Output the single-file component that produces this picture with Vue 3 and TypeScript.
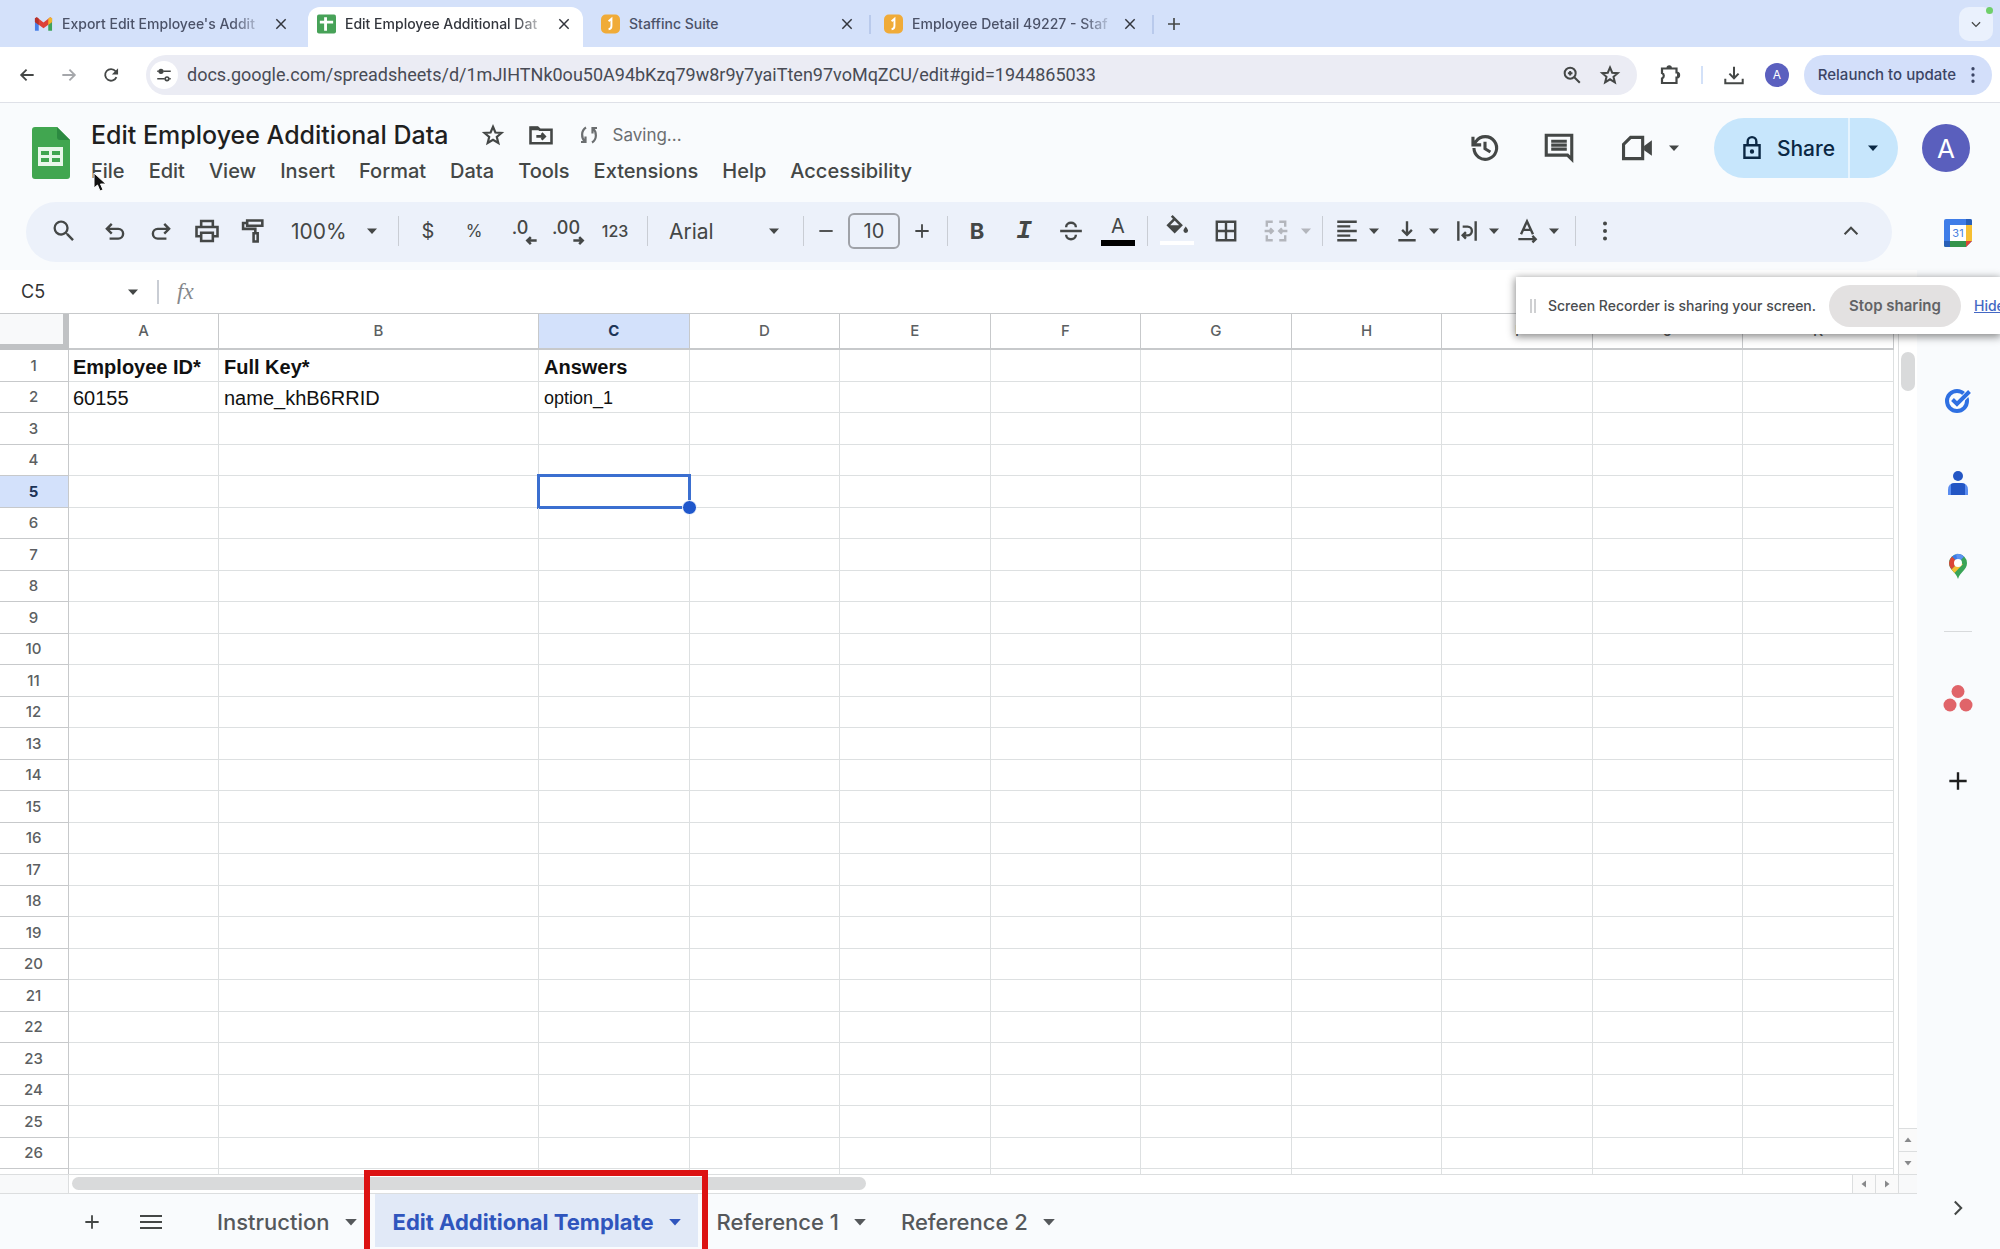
<script setup lang="ts">
import { h, ref } from 'vue'
import type { FunctionalComponent } from 'vue'

interface Glyph {
  line?: string
  fill?: string
}

const glyphs: Record<string, Glyph> = {
  back: { line: 'M20 12H5M11.500 5.500 5 12l6.500 6.500' },
  forward: { line: 'M4 12h15M12.500 5.500 19 12l-6.500 6.500' },
  reload: { line: 'M18.500 14.500A7 7 0 1 1 17.500 7.500L19 9.500', fill: 'M20.500 4v7.500H13z' },
  tune: { line: 'M3 7h2M11 7h10M3 17h10M19 17h2', fill: 'M8 3.500a3.500 3.500 0 1 0 0 7 3.500 3.500 0 0 0 0-7zM16 13.500a3.500 3.500 0 1 0 0 7 3.500 3.500 0 0 0 0-7zm0 2.200a1.300 1.300 0 1 1 0 2.600 1.300 1.300 0 0 1 0-2.600z' },
  close: { line: 'M5 5l14 14M19 5 5 19' },
  plus: { line: 'M12 4v16M4 12h16' },
  minus: { line: 'M4 12h16' },
  menu: { line: 'M1 6h22M1 12h22M1 18h22' },
  chevronDown: { line: 'M5 9l7 7 7-7' },
  chevronUp: { line: 'M5 15.500l7-7 7 7' },
  chevronRight: { line: 'M8.500 5l7 7-7 7' },
  magnify: { line: 'M10 4a6 6 0 1 0 0 12 6 6 0 0 0 0-12zM14.500 14.500l6 6M10 7.500v5M7.500 10h5' },
  star: { line: 'M12 3.800l2.400 5.700 6.100.5-4.700 4 1.500 6-5.300-3.300L6.700 20l1.500-6-4.700-4 6.100-.5z' },
  puzzle: { line: 'M4 5.500h14.500v4a2.600 2.600 0 0 1 0 5.200v5.300H4v-4.500a3 3 0 0 0 0-5.500z', fill: 'M8.500 5a2.700 2.700 0 0 1 5.400 0zM19 9.500a2.700 2.700 0 0 1 0 5.400z' },
  download: { line: 'M12 3v12M7 10.500l5 5 5-5M2.500 16v5h19v-5' },
  dots: { fill: 'M12 2.500a2 2 0 1 0 0 4 2 2 0 0 0 0-4zM12 10a2 2 0 1 0 0 4 2 2 0 0 0 0-4zM12 17.500a2 2 0 1 0 0 4 2 2 0 0 0 0-4z' },
  history: { line: 'M4.200 12a8 8 0 1 0 1.500-4.700L3.800 9.500M3.500 4v5.800h5.800M12 7.500v5l3.800 2.300' },
  comment: { line: 'M3 3h18v17l-3-3H3zM6.500 7.200h11M6.500 10h11M6.500 12.800h11' },
  meet: { line: 'M7.500 4.500H16v15H2.500V9.500z', fill: 'M17 10.500l5.500-4v11l-5.500-4z' },
  lock: { line: 'M5 9.500h14v11.500H5zM8 9.500V6a4 4 0 0 1 8 0v3.500', fill: 'M12 13.200a2 2 0 1 0 0 4 2 2 0 0 0 0-4z' },
  folder: { line: 'M3 5.500h6l2 2h10V19H3zM8 13.200h7M12.500 10.500l2.700 2.700-2.700 2.700', fill: 'M3 5h6.500l2 3H3z' },
  sync: { line: 'M9 4.500C4 7.500 4 15 8 18.500M8.500 13.500v5.500H4M15 19.500C20 16.500 20 9 16 5.500M15.500 10.500V5H20' },
  search: { fill: 'M15.500 14h-.79l-.28-.27A6.471 6.471 0 0 0 16 9.500 6.500 6.500 0 1 0 9.500 16c1.610 0 3.090-.59 4.230-1.570l.27.28v.79l5 4.990L20.490 19l-4.990-5zm-6 0C7.010 14 5 11.990 5 9.500S7.010 5 9.500 5 14 7.010 14 9.500 11.990 14 9.500 14z' },
  undo: { line: 'M5 10h10a4.300 4.300 0 0 1 0 9H7M9 5.500l-4.500 4.500L9 14.500' },
  redo: { line: 'M19 10H9a4.300 4.300 0 0 0 0 9h8M15 5.500l4.500 4.500-4.500 4.500' },
  print: { line: 'M7 8V3.500h10V8M7 16.500H3V8.500h18v8h-4M7 13.500h10v7H7z' },
  brush: { line: 'M7 3h13v4.500H7zM7 5.200H3.500v5H14V14M12.500 14h3.500v7h-3.500z' },
  decLess: { line: 'M22 18.500h-8M17 15.500l-3 3 3 3' },
  decMore: { line: 'M14 18.500h8M19 15.500l3 3-3 3' },
  strike: { line: 'M2 12h20M7.500 8.500C7.500 3 16.500 3 16.500 8.500M7.500 15.500c0 5.500 9 5.500 9 0' },
  bucket: { line: 'M7.500 2.500l8 8-5.500 5.500L4.500 10.500 10 5', fill: 'M4.500 10.500h11L10 16.500zM19.500 11.500s-2 2.300-2 3.600a2 2 0 0 0 4 0c0-1.300-2-3.600-2-3.600z' },
  borders: { line: 'M3.500 3.500h17v17h-17zM12 3.500v17M3.500 12h17' },
  merge: { line: 'M9 3.500H3.500V8M15 3.500h5.500V8M9 20.500H3.500V16M15 20.500h5.500V16M1.500 12H9M6.500 9.500 9 12l-2.500 2.500M22.500 12H15M17.500 9.500 15 12l2.500 2.500' },
  align: { line: 'M3 3.500h18M3 7.700h12M3 12h18M3 16.300h12M3 20.500h18' },
  bottom: { line: 'M4 20.500h16M12 3v12.500M7.500 11l4.500 4.500 4.500-4.500' },
  wrap: { line: 'M4 3v18M20 3v18M8 8h4.500a3.500 3.500 0 0 1 0 8H8.500M11 13l-3 3 3 3' },
  rotate: { line: 'M6.500 15 12 3l5.500 12M8.500 11h7M4 19.500h16M17 16.500l3 3-3 3' },
  caret: { fill: 'M2 7h20l-10 11z' },
  tri: { fill: 'M5 8h14l-7 9z' },
}

const Icon: FunctionalComponent<{ name: string }> = (props) => {
  const g = glyphs[props.name]
  return h('svg', { viewBox: '0 0 24 24', 'aria-hidden': 'true' }, [
    g.line ? h('path', { d: g.line, fill: 'none', stroke: 'currentColor', 'stroke-width': 2.2 }) : null,
    g.fill ? h('path', { d: g.fill, fill: 'currentColor' }) : null,
  ])
}
Icon.props = ['name']

const menus = ['File', 'Edit', 'View', 'Insert', 'Format', 'Data', 'Tools', 'Extensions', 'Help', 'Accessibility']
const columns = ['A', 'B', 'C', 'D', 'E', 'F', 'G', 'H', 'I', 'J', 'K']
const rows = Array.from({ length: 26 }, (_, i) => i + 1)
const cells: Record<string, string> = {
  A1: 'Employee ID*',
  B1: 'Full Key*',
  C1: 'Answers',
  A2: '60155',
  B2: 'name_khB6RRID',
  C2: 'option_1',
}
const selected = { col: 'C', row: 5 }
const alignments = [
  { icon: 'align', label: 'Horizontal align' },
  { icon: 'bottom', label: 'Vertical align' },
  { icon: 'wrap', label: 'Text wrapping' },
  { icon: 'rotate', label: 'Text rotation' },
]
const url = ref('docs.google.com/spreadsheets/d/1mJIHTNk0ou50A94bKzq79w8r9y7yaiTten97voMqZCU/edit#gid=1944865033')
const fontSize = ref('10')
const cellName = ref('C5')
const formula = ref('')
</script>

<template>
  <div class="window">
    <nav class="tabstrip" aria-label="Browser tabs">
      <div class="tab">
        <svg class="favicon" viewBox="0 0 20 20" aria-hidden="true">
          <path d="M1 4v13h4V8z" fill="#4a80e8" />
          <path d="M19 4v13h-4V8z" fill="#3fa45b" />
          <path d="M1 4l2-1 7 5.500L17 3l2 1v4l-9 6.500L1 8z" fill="#dd4238" />
          <path d="M15 4.600 17 3l2 1v4l-4 3z" fill="#f2b52c" />
          <path d="M1 4l2-1 2 1.600V11L1 8z" fill="#b5322b" />
        </svg>
        <span class="tab-title faded">Export Edit Employee's Addit</span>
        <button class="tab-close" aria-label="Close tab"><Icon name="close" class="i16" /></button>
      </div>
      <div class="tab active">
        <svg class="favicon" viewBox="0 0 20 20" aria-hidden="true">
          <rect width="20" height="20" rx="2" fill="#47a258" />
          <path d="M3 8h14M9 3v14" stroke="#fff" stroke-width="3" />
        </svg>
        <span class="tab-title faded">Edit Employee Additional Dat</span>
        <button class="tab-close" aria-label="Close tab"><Icon name="close" class="i16" /></button>
      </div>
      <div class="tab ruled">
        <svg class="favicon" viewBox="0 0 20 20" aria-hidden="true">
          <rect width="20" height="20" rx="5" fill="#f0ab38" />
          <path d="M8 7l3-2.500V12q0 3-3 3.500" fill="none" stroke="#fff" stroke-width="2" />
        </svg>
        <span class="tab-title">Staffinc Suite</span>
        <button class="tab-close" aria-label="Close tab"><Icon name="close" class="i16" /></button>
      </div>
      <div class="tab ruled">
        <svg class="favicon" viewBox="0 0 20 20" aria-hidden="true">
          <rect width="20" height="20" rx="5" fill="#f0ab38" />
          <path d="M8 7l3-2.500V12q0 3-3 3.500" fill="none" stroke="#fff" stroke-width="2" />
        </svg>
        <span class="tab-title faded">Employee Detail 49227 - Staf</span>
        <button class="tab-close" aria-label="Close tab"><Icon name="close" class="i16" /></button>
      </div>
      <button class="new-tab" aria-label="New tab"><Icon name="plus" class="i18" /></button>
      <button class="tab-search" aria-label="Search tabs"><Icon name="chevronDown" class="i14" /></button>
    </nav>

    <div class="omnibar">
      <button class="nav-btn" aria-label="Back"><Icon name="back" class="i20" /></button>
      <button class="nav-btn dim" aria-label="Forward"><Icon name="forward" class="i20" /></button>
      <button class="nav-btn" aria-label="Reload"><Icon name="reload" class="i20" /></button>
      <div class="address">
        <button class="site-info" aria-label="Site information"><Icon name="tune" class="i18" /></button>
        <input v-model="url" class="url" aria-label="Address" />
        <button class="addr-btn" aria-label="Zoom"><Icon name="magnify" class="i22" /></button>
        <button class="addr-btn" aria-label="Bookmark"><Icon name="star" class="i22" /></button>
      </div>
      <button class="ext" aria-label="Extensions"><Icon name="puzzle" class="i24" /></button>
      <span class="omni-rule"></span>
      <button class="ext dl" aria-label="Downloads"><Icon name="download" class="i22" /></button>
      <button class="mini-avatar" aria-label="Profile">A</button>
      <button class="relaunch">Relaunch to update<Icon name="dots" class="i20" /></button>
    </div>

    <header class="doc-header">
      <svg class="sheets" viewBox="0 0 38 52" aria-hidden="true">
        <path d="M3 0h22l13 13v36a3 3 0 0 1-3 3H3a3 3 0 0 1-3-3V3a3 3 0 0 1 3-3z" fill="#41a650" />
        <path d="M25 0l13 13H28a3 3 0 0 1-3-3z" fill="#2c8a41" />
        <path d="M6 20h25v19H6z" fill="#e9f7ea" />
        <path d="M9 24h8v4H9zM20 24h8v4h-8zM9 31h8v4H9zM20 31h8v4h-8z" fill="#41a650" />
      </svg>
      <div class="doc-meta">
        <div class="title-row">
          <h1>Edit Employee Additional Data</h1>
          <button class="meta-btn" aria-label="Star"><Icon name="star" class="i24" /></button>
          <button class="meta-btn" aria-label="Move"><Icon name="folder" class="i28" /></button>
          <span class="saving"><Icon name="sync" class="i24" />Saving...</span>
        </div>
        <nav class="menubar" aria-label="Menu">
          <button v-for="m in menus" :key="m">{{ m }}</button>
        </nav>
        <svg class="pointer" viewBox="0 0 14 20" aria-hidden="true">
          <path d="M1 1v15l3.500-3 2.500 6 3-1.200-2.500-5.800H13z" fill="#111" stroke="#fff" stroke-width="1" />
        </svg>
      </div>
      <div class="header-actions">
        <button class="head-btn" aria-label="History"><Icon name="history" class="i34" /></button>
        <button class="head-btn" aria-label="Comments"><Icon name="comment" class="i34" /></button>
        <button class="head-btn meet" aria-label="Meet"><Icon name="meet" class="i34" /><Icon name="caret" class="i12" /></button>
        <div class="share">
          <button class="share-main"><Icon name="lock" class="i26" />Share</button>
          <button class="share-more" aria-label="Share options"><Icon name="caret" class="i12" /></button>
        </div>
        <button class="avatar" aria-label="Account">A</button>
      </div>
    </header>

    <div class="body">
      <main class="main">
        <div class="toolbar" role="toolbar" aria-label="Formatting">
          <button class="tool lead" aria-label="Search menus"><Icon name="search" class="i28" /></button>
          <button class="tool" aria-label="Undo"><Icon name="undo" class="i26" /></button>
          <button class="tool" aria-label="Redo"><Icon name="redo" class="i26" /></button>
          <button class="tool" aria-label="Print"><Icon name="print" class="i28" /></button>
          <button class="tool" aria-label="Paint format"><Icon name="brush" class="i28" /></button>
          <label class="drop zoom">
            <select aria-label="Zoom"><option>100%</option></select>
            <Icon name="caret" class="i12" />
          </label>
          <span class="rule"></span>
          <button class="tool glyph">$</button>
          <button class="tool glyph pct">%</button>
          <button class="tool dec" aria-label="Decrease decimal places"><span>.0</span><Icon name="decLess" class="i28" /></button>
          <button class="tool dec" aria-label="Increase decimal places"><span>.00</span><Icon name="decMore" class="i28" /></button>
          <button class="tool num">123</button>
          <span class="rule"></span>
          <label class="drop font">
            <select aria-label="Font"><option>Arial</option></select>
            <Icon name="caret" class="i12" />
          </label>
          <span class="rule"></span>
          <div class="size">
            <button aria-label="Decrease font size"><Icon name="minus" class="i20" /></button>
            <input v-model="fontSize" aria-label="Font size" />
            <button aria-label="Increase font size"><Icon name="plus" class="i20" /></button>
          </div>
          <span class="rule"></span>
          <div class="styles">
            <button class="tool bold-btn">B</button>
            <button class="tool italic-btn">I</button>
            <button class="tool" aria-label="Strikethrough"><Icon name="strike" class="i26" /></button>
            <button class="tool colour">A</button>
          </div>
          <span class="rule"></span>
          <div class="fills">
            <button class="tool fill" aria-label="Fill colour"><Icon name="bucket" class="i28" /></button>
            <button class="tool" aria-label="Borders"><Icon name="borders" class="i26" /></button>
            <button class="pair off" aria-label="Merge cells"><Icon name="merge" class="i26" /><Icon name="caret" class="i12" /></button>
          </div>
          <span class="rule"></span>
          <button v-for="a in alignments" :key="a.icon" class="pair" :aria-label="a.label">
            <Icon :name="a.icon" class="i26" /><Icon name="caret" class="i12" />
          </button>
          <span class="rule"></span>
          <button class="tool" aria-label="More"><Icon name="dots" class="i24" /></button>
          <button class="tool end" aria-label="Hide menus"><Icon name="chevronUp" class="i22" /></button>
        </div>

        <div class="formula-bar">
          <input v-model="cellName" class="cell-name" aria-label="Cell name" />
          <Icon name="caret" class="i12" />
          <span class="rule"></span>
          <label class="fx" for="formula">fx</label>
          <input id="formula" v-model="formula" class="formula" />
        </div>

        <div class="grid-area">
          <div class="grid-scroll">
            <table>
              <colgroup>
                <col class="c-head" />
                <col class="c-a" />
                <col class="c-b" />
                <col v-for="n in 9" :key="n" />
              </colgroup>
              <thead>
                <tr>
                  <th class="corner"></th>
                  <th v-for="c in columns" :key="c" :class="{ sel: c === selected.col }">{{ c }}</th>
                </tr>
              </thead>
              <tbody>
                <tr v-for="r in rows" :key="r">
                  <th :class="{ sel: r === selected.row }">{{ r }}</th>
                  <td
                    v-for="c in columns"
                    :key="c"
                    :class="{ head: r === 1, small: c === 'C', current: c === selected.col && r === selected.row }"
                  >{{ cells[c + r] }}</td>
                </tr>
                <tr class="stub">
                  <th></th>
                  <td v-for="c in columns" :key="c"></td>
                </tr>
              </tbody>
            </table>
          </div>
          <div class="vbar">
            <div class="vthumb"></div>
            <button class="arrow" aria-label="Scroll up"><Icon name="tri" class="i12 flip" /></button>
            <button class="arrow" aria-label="Scroll down"><Icon name="tri" class="i12" /></button>
          </div>
        </div>

        <div class="hbar">
          <div class="hpad"></div>
          <div class="htrack"><div class="hthumb"></div></div>
          <button class="harrow" aria-label="Scroll left"><Icon name="tri" class="i12 left" /></button>
          <button class="harrow" aria-label="Scroll right"><Icon name="tri" class="i12 right" /></button>
          <div class="hcorner"></div>
        </div>

        <div class="sheet-tabs">
          <button class="sheet-btn" aria-label="Add sheet"><Icon name="plus" class="i20" /></button>
          <button class="sheet-btn" aria-label="All sheets"><Icon name="menu" class="i24" /></button>
          <button class="sheet instruction">Instruction<Icon name="caret" class="i14" /></button>
          <div class="highlight">
            <button class="sheet current-sheet">Edit Additional Template<Icon name="caret" class="i14" /></button>
          </div>
          <button class="sheet">Reference 1<Icon name="caret" class="i14" /></button>
          <button class="sheet">Reference 2<Icon name="caret" class="i14" /></button>
        </div>
      </main>

      <aside class="side">
        <button aria-label="Calendar">
          <svg viewBox="0 0 28 28" class="i28" aria-hidden="true">
            <path d="M2 0h24a2 2 0 0 1 2 2v20l-6 6H2a2 2 0 0 1-2-2V2a2 2 0 0 1 2-2z" fill="#3f7de8" />
            <path d="M22 6h6v16h-6z" fill="#f6bf32" />
            <path d="M0 22h22v6H2a2 2 0 0 1-2-2z" fill="#35944c" />
            <path d="M22 0h4a2 2 0 0 1 2 2v4h-6zM0 22h6v6H2a2 2 0 0 1-2-2z" fill="#285fb8" />
            <path d="M22 22h6l-6 6z" fill="#dc4633" />
            <path d="M6 6h16v16H6z" fill="#fff" />
            <text x="14" y="18" text-anchor="middle" class="day">31</text>
          </svg>
        </button>
        <button aria-label="Tasks">
          <svg viewBox="0 0 28 28" class="i28" aria-hidden="true">
            <circle cx="13" cy="15" r="10" fill="none" stroke="#2f70e2" stroke-width="4" />
            <path d="M8 13.500l5 5L26 5" fill="none" stroke="#fff" stroke-width="6" />
            <path d="M8.500 13.500l4.500 4.500L25.500 5.500" fill="none" stroke="#2f70e2" stroke-width="4" />
          </svg>
        </button>
        <button aria-label="Contacts">
          <svg viewBox="0 0 28 28" class="i28" aria-hidden="true">
            <circle cx="14" cy="7" r="5" fill="#2456c4" />
            <path d="M4 26v-5q0-7 7-7h6q7 0 7 7v5z" fill="#5a8cf0" />
            <path d="M7 26V15q2-1 4-1h6q2 0 4 1v11z" fill="#2456c4" />
          </svg>
        </button>
        <button aria-label="Maps">
          <svg viewBox="0 0 28 28" class="i28" aria-hidden="true">
            <path d="M14 27C12 20 5 18 5 11a9 9 0 0 1 18 0c0 7-7 9-9 16z" fill="#3aa457" />
            <path d="M14 11 8 4.500A9 9 0 0 1 20 4.500z" fill="#3d7ae8" />
            <path d="M14 11 20 4.500A9 9 0 0 0 12 2z" fill="#5c93f0" />
            <path d="M14 11 7.500 17.500Q5 14.500 5 11a9 9 0 0 1 3-6.500z" fill="#dc4437" />
            <path d="M14 11l-6.500 6.500 3 3.500L19 12z" fill="#f5bf35" />
            <circle cx="14" cy="11" r="4" fill="#fff" />
          </svg>
        </button>
        <span class="side-rule"></span>
        <button aria-label="Asana">
          <svg viewBox="0 0 30 28" class="i30" aria-hidden="true">
            <circle cx="15" cy="7.500" r="6.500" fill="#e06469" />
            <circle cx="7" cy="21" r="6.500" fill="#e06469" />
            <circle cx="23" cy="21" r="6.500" fill="#e06469" />
          </svg>
        </button>
        <button class="dark" aria-label="Get add-ons"><Icon name="plus" class="i26" /></button>
        <button class="collapse" aria-label="Hide side panel"><Icon name="chevronRight" class="i22" /></button>
      </aside>
    </div>

    <div class="share-notice" role="status">
      <span class="grip"></span>
      <span class="notice-text">Screen Recorder is sharing your screen.</span>
      <button class="stop">Stop sharing</button>
      <a href="#" class="hide">Hide</a>
    </div>
  </div>
</template>

<style>
body {
  margin: 0;
  background: #f9fbfd;
}
</style>

<style scoped>
* {
  box-sizing: border-box;
}
.window {
  position: relative;
  overflow: hidden;
  min-height: 100vh;
  display: flex;
  flex-direction: column;
  font-family: Inter, "Liberation Sans", sans-serif;
  color: #444746;
}
button {
  border: 0;
  padding: 0;
  background: none;
  color: inherit;
  font: inherit;
  display: flex;
  align-items: center;
  justify-content: center;
  flex: none;
}
input,
select {
  border: 0;
  padding: 0;
  background: none;
  color: inherit;
  font: inherit;
  outline: 0;
  min-width: 0;
}
svg {
  flex: none;
  display: block;
}
.i12 { width: 12px; height: 12px; }
.i14 { width: 14px; height: 14px; }
.i16 { width: 16px; height: 16px; }
.i18 { width: 18px; height: 18px; }
.i20 { width: 20px; height: 20px; }
.i22 { width: 22px; height: 22px; }
.i24 { width: 24px; height: 24px; }
.i26 { width: 26px; height: 26px; }
.i28 { width: 28px; height: 28px; }
.i30 { width: 30px; height: 28px; }
.i34 { width: 34px; height: 34px; }
.flip { transform: rotate(180deg); }
.left { transform: rotate(90deg); }
.right { transform: rotate(-90deg); }

/* Browser tabs */
.tabstrip {
  display: flex;
  align-items: stretch;
  height: 47px;
  padding-left: 24px;
  background: #d4e1fa;
}
.tab {
  position: relative;
  display: flex;
  align-items: center;
  width: 284px;
  padding: 0 15px 0 10px;
  font-size: 14px;
  font-weight: 500;
  color: #4b5268;
}
.tab.active {
  width: 275px;
  margin: 7px 8px 0 0;
  padding: 0 7px 7px 9px;
  border-radius: 12px 12px 0 0;
  background: #fff;
  color: #33363d;
}
.tab.ruled {
  width: 283px;
}
.tab.ruled::after {
  content: "";
  position: absolute;
  right: 3px;
  top: 15px;
  width: 2px;
  height: 19px;
  background: #b9caec;
}
.favicon {
  width: 19px;
  height: 20px;
}
.tab-title {
  flex: 1;
  margin-left: 9px;
  white-space: nowrap;
}
.tab-title.faded {
  mask-image: linear-gradient(to right, #000 170px, transparent 204px);
}
.tab-close {
  width: 24px;
  height: 24px;
  color: #33363d;
}
.new-tab {
  width: 34px;
}
.tab-search {
  position: relative;
  width: 34px;
  height: 34px;
  margin: 7px 7px 0 auto;
  border-radius: 10px;
  background: #eaf1fd;
}
.tab-search::after {
  content: "";
  position: absolute;
  top: 0;
  right: 0;
  width: 7px;
  height: 7px;
  border-radius: 50%;
  background: #6fcf6a;
}

/* Address bar */
.omnibar {
  display: flex;
  align-items: center;
  height: 56px;
  padding: 0 8px 0 6px;
  background: #fff;
  border-bottom: 1px solid #dfe1e8;
}
.nav-btn {
  width: 42px;
  height: 40px;
}
.nav-btn.dim {
  color: #a5a7ab;
}
.address {
  flex: 1;
  display: flex;
  align-items: center;
  height: 40px;
  margin-left: 14px;
  padding: 0 8px 0 4px;
  border-radius: 20px;
  background: #ebecf4;
}
.site-info {
  width: 28px;
  height: 28px;
  border-radius: 50%;
  background: #fff;
}
.url {
  flex: 1;
  margin-left: 9px;
  font-family: Roboto, "Liberation Sans", sans-serif;
  font-size: 18px;
  color: #484b55;
}
.addr-btn {
  width: 38px;
  height: 32px;
}
.ext {
  width: 50px;
  margin-left: 8px;
}
.omni-rule {
  width: 2px;
  height: 18px;
  margin: 0 4px 0 6px;
  background: #d3e1f8;
}
.ext.dl {
  margin-left: 2px;
}
.mini-avatar {
  width: 24px;
  height: 24px;
  margin: 0 15px 0 6px;
  border-radius: 50%;
  background: #5b60bf;
  color: #fff;
  font-size: 12px;
}
.relaunch {
  height: 40px;
  gap: 7px;
  padding: 0 9px 0 14px;
  border-radius: 20px;
  background: #d3dffa;
  color: #3b4565;
  font-size: 15px;
  font-weight: 500;
}

/* Document header */
.doc-header {
  display: flex;
  align-items: flex-start;
  height: 99px;
  padding: 15px 30px 0 32px;
  background: #f9fbfd;
}
.sheets {
  width: 38px;
  height: 52px;
  margin-top: 9px;
}
.doc-meta {
  position: relative;
  margin-left: 21px;
}
.title-row {
  display: flex;
  align-items: center;
  height: 34px;
}
h1 {
  margin: 0 20px 0 0;
  font-size: 25px;
  font-weight: 500;
  line-height: 32px;
  color: #1f1f1f;
  white-space: nowrap;
}
.meta-btn {
  width: 48px;
}
.saving {
  display: flex;
  align-items: center;
  gap: 12px;
  margin-left: 12px;
  font-size: 17px;
  color: #6b6e70;
}
.menubar {
  display: flex;
  gap: 24px;
  margin-top: 4px;
}
.menubar button {
  font-size: 20px;
  font-weight: 500;
  line-height: 30px;
}
.pointer {
  position: absolute;
  left: 2px;
  top: 54px;
  width: 14px;
  height: 20px;
}
.header-actions {
  display: flex;
  align-items: center;
  height: 60px;
  margin-left: auto;
}
.head-btn {
  width: 74px;
}
.head-btn.meet {
  gap: 14px;
  width: 80px;
  margin: 0 24px 0 14px;
}
.share {
  display: flex;
  height: 60px;
  border-radius: 30px;
  overflow: hidden;
  background: #c7e6fc;
  color: #0b2844;
}
.share-main {
  width: 134px;
  padding-left: 12px;
  gap: 12px;
  font-size: 21px;
  font-weight: 500;
}
.share-more {
  width: 50px;
  padding-right: 2px;
  border-left: 2px solid #e6f4fe;
}
.avatar {
  width: 48px;
  height: 48px;
  margin-left: 24px;
  border-radius: 50%;
  background: #5a5fbd;
  color: #fff;
  font-size: 26px;
}

/* Body */
.body {
  display: flex;
  flex: 1;
}
.main {
  flex: 1;
  min-width: 0;
}
.toolbar {
  display: flex;
  align-items: center;
  height: 60px;
  margin: 0 25px 8px 26px;
  padding: 0 18px 2px 15px;
  border-radius: 30px;
  background: #ecf1fa;
}
.tool {
  width: 46px;
  height: 40px;
}
.tool.lead {
  margin-right: 5px;
}
.tool.end {
  margin-left: auto;
}
.rule {
  flex: none;
  width: 1px;
  height: 30px;
  margin: 0 6px;
  background: #c9cdd4;
}
.drop {
  display: flex;
  align-items: center;
  justify-content: space-between;
  padding: 0 14px 0 15px;
  font-size: 21px;
}
.drop select {
  appearance: none;
  width: 80px;
}
.drop.zoom {
  width: 116px;
}
.drop.font {
  width: 143px;
  padding-right: 17px;
}
.glyph {
  font-size: 20px;
}
.glyph.pct {
  font-size: 17px;
}
.dec {
  position: relative;
  font-size: 18px;
  font-weight: 500;
}
.dec span {
  padding-bottom: 8px;
}
.dec svg {
  position: absolute;
  left: 14px;
  top: 8px;
}
.num {
  width: 52px;
  font-size: 16px;
  font-weight: 500;
}
.size {
  display: flex;
  align-items: center;
  gap: 6px;
  padding-right: 3px;
}
.size button {
  width: 32px;
  height: 32px;
}
.size input {
  width: 52px;
  height: 36px;
  border: 2px solid #9fa2a8;
  border-radius: 6px;
  font-size: 20px;
  text-align: center;
}
.styles {
  display: flex;
  gap: 1px;
}
.bold-btn {
  font-size: 22px;
  font-weight: 700;
}
.italic-btn {
  font-family: "Liberation Mono", monospace;
  font-size: 26px;
  font-style: italic;
  font-weight: 700;
}
.colour {
  align-items: flex-start;
  padding-top: 3px;
  font-size: 20px;
  background: linear-gradient(#000, #000) center 29px / 34px 6px no-repeat;
}
.fills {
  display: flex;
  gap: 3px;
}
.fill {
  align-items: flex-start;
  padding-top: 2px;
  background: linear-gradient(#fff, #fff) center 30px / 34px 4px no-repeat;
}
.pair {
  width: 60px;
  height: 40px;
  padding-left: 5px;
  gap: 8px;
  justify-content: flex-start;
}
.fills .pair {
  width: 64px;
  padding-left: 11px;
  gap: 11px;
}
.off {
  color: #b3b6bc;
}

/* Formula bar */
.formula-bar {
  display: flex;
  align-items: center;
  height: 43px;
  padding-left: 21px;
  background: #fff;
}
.cell-name {
  width: 106px;
  font-size: 18px;
  color: #333;
}
.formula-bar .rule {
  width: 2px;
  height: 24px;
  margin: 0 18px;
}
.fx {
  width: 32px;
  font-family: "Liberation Serif", serif;
  font-size: 23px;
  font-style: italic;
  color: #85888c;
}
.formula {
  flex: 1;
  font-size: 18px;
}

/* Grid */
.grid-area {
  display: flex;
  background: #fff;
  border-top: 1px solid #c7c9cb;
}
.grid-scroll {
  flex: 1;
  min-width: 0;
  padding-right: 4px;
  border-right: 1px solid #dcdedf;
}
table {
  width: 100%;
  table-layout: fixed;
  border-collapse: separate;
  border-spacing: 0;
}
.c-head { width: 69px; }
.c-a { width: 150px; }
.c-b { width: 320px; }
th {
  padding: 0;
  border-right: 1px solid #c7c9cb;
  border-bottom: 1px solid #c7c9cb;
  font-size: 15px;
  font-weight: 500;
  line-height: 20px;
  text-align: center;
  color: #5c5f62;
}
thead th {
  height: 36px;
  border-bottom-width: 2px;
}
thead .corner {
  border-right: 6px solid #c0c2c4;
  border-bottom: 6px solid #c0c2c4;
  background: #f8f9fa;
}
th.sel {
  background: #d3e1fb;
  font-weight: 700;
  color: #1d3457;
}
td {
  position: relative;
  padding: 2px 5px 0;
  border-right: 1px solid #dde0e1;
  border-bottom: 1px solid #dde0e1;
  font-family: "Liberation Sans", Arial, sans-serif;
  font-size: 20px;
  line-height: 20px;
  white-space: nowrap;
  color: #111;
}
td:nth-child(2) {
  padding-left: 4px;
}
td.small {
  font-size: 18px;
}
td.head {
  font-size: 20px;
  font-weight: 700;
}
tbody tr {
  height: 31px;
}
tbody tr:nth-child(odd) {
  height: 32px;
}
tbody tr.stub {
  height: 5px;
}
.stub th,
.stub td {
  padding: 0;
  border-bottom: 0;
  line-height: 0;
}
tbody th {
  padding-right: 1px;
}
.current::before {
  content: "";
  position: absolute;
  inset: -2px;
  border: 3px solid #3b6fd0;
}
.current::after {
  content: "";
  position: absolute;
  right: -8px;
  bottom: -8px;
  width: 13px;
  height: 13px;
  border: 1px solid #fff;
  border-radius: 50%;
  background: #1f57cc;
  z-index: 1;
}
.vbar {
  display: flex;
  flex-direction: column;
  align-items: center;
  width: 18px;
  padding-top: 38px;
}
.vthumb {
  width: 14px;
  height: 39px;
  margin-bottom: auto;
  border-radius: 7px;
  background: #d9dadb;
}
.arrow {
  width: 18px;
  height: 23px;
  border-top: 1px solid #dcdedf;
  background: #fafafa;
  color: #88898b;
}

/* Horizontal scrollbar */
.hbar {
  display: flex;
  height: 20px;
  border-top: 1px solid #dcdedf;
  border-bottom: 1px solid #dcdedf;
  background: #fff;
}
.hpad {
  width: 69px;
  border-right: 1px solid #dcdedf;
  background: #f8f9fa;
}
.htrack {
  flex: 1;
  padding: 2px 3px;
}
.hthumb {
  width: 44.7%;
  height: 13px;
  border-radius: 7px;
  background: #d9dadb;
}
.harrow {
  width: 23px;
  border-left: 1px solid #dcdedf;
  background: #fafafa;
  color: #88898b;
}
.hcorner {
  width: 19px;
  border-left: 1px solid #dcdedf;
  background: #f8f9fa;
}

/* Sheet tabs */
.sheet-tabs {
  display: flex;
  height: 55px;
  padding-left: 62px;
}
.sheet-btn {
  width: 59px;
}
.sheet {
  height: 53px;
  padding: 2px 16px 0 18px;
  gap: 14px;
  font-size: 22px;
  font-weight: 500;
  color: #55585b;
}
.sheet.instruction {
  margin: 0 1px 0 19px;
}
.highlight {
  position: relative;
  margin-right: 1px;
}
.highlight::after {
  content: "";
  position: absolute;
  inset: -24px -10px -10px -11px;
  border: 6px solid #dc1212;
  pointer-events: none;
}
.current-sheet {
  background: #e1e9f7;
  color: #2f55bd;
  font-weight: 700;
}

/* Side panel */
.side {
  display: flex;
  flex-direction: column;
  align-items: center;
  width: 83px;
  padding-right: 2px;
  background: #f9fbfd;
}
.side button {
  height: 83px;
  width: 60px;
}
.side button:first-child {
  height: 62px;
  margin-bottom: 94px;
}
.day {
  font-size: 11px;
  fill: #4b7fe0;
}
.side-rule {
  width: 28px;
  height: 1px;
  margin: 24px 0;
  background: #d8dadc;
}
.side .dark {
  color: #1f1f1f;
}
.side .collapse {
  margin-top: auto;
}

/* Screen sharing notice */
.share-notice {
  position: absolute;
  top: 277px;
  right: 0;
  display: flex;
  align-items: center;
  width: 484px;
  height: 57px;
  padding-left: 14px;
  background: #fff;
  box-shadow: 0 2px 8px 1px rgba(0, 0, 0, 0.45);
  white-space: nowrap;
}
.grip {
  flex: none;
  width: 6px;
  height: 14px;
  border: solid #cfd0d2;
  border-width: 0 2px;
}
.notice-text {
  flex: none;
  width: 293px;
  padding-left: 12px;
  font-size: 14px;
  font-weight: 500;
  color: #4a4d50;
}
.stop {
  width: 132px;
  height: 42px;
  border-radius: 21px;
  background: #e3e1e1;
  color: #626366;
  font-size: 15px;
  font-weight: 600;
}
.hide {
  margin-left: 13px;
  font-size: 14px;
  font-weight: 500;
  color: #4468c4;
}
</style>
